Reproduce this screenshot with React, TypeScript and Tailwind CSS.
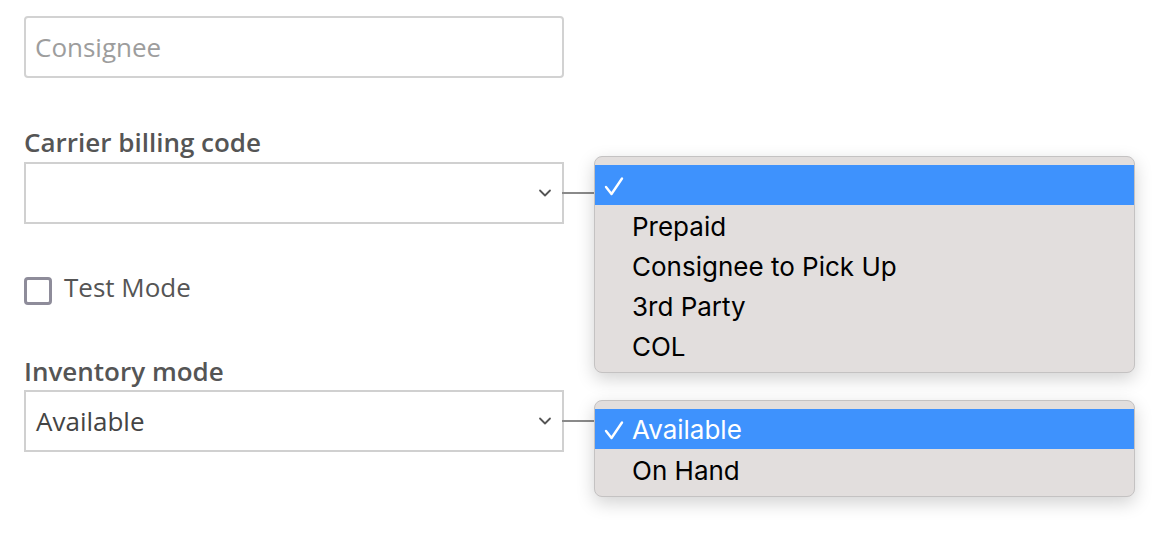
import React from 'react';

const Chevron = () => (
  <svg width="14" height="9" viewBox="0 0 14 9" className="absolute right-[10px] top-1/2 -translate-y-1/2">
    <path d="M2 2 L7 7 L12 2" fill="none" stroke="#555" strokeWidth="1.8" strokeLinecap="round" strokeLinejoin="round" />
  </svg>
);

const Check = () => (
  <svg width="20" height="20" viewBox="0 0 20 20">
    <path d="M2 11 L7.5 18 L18 2.5" fill="none" stroke="#fff" strokeWidth="2.4" strokeLinecap="round" strokeLinejoin="round" />
  </svg>
);

interface MenuProps {
  selected: string;
  items: string[];
  className: string;
}

const Menu = ({ selected, items, className }: MenuProps) => {
  return (
    <div
      className={`absolute left-[calc(100%+32px)] w-[541px] rounded-[8px] border border-[#c4c2c2] bg-[#e2dedd] pt-[8px] pb-[7px] shadow-[0_6px_18px_rgba(0,0,0,0.18)] font-['Inter',sans-serif] ${className}`}
    >
      <div className="flex h-[40px] items-center bg-[#3e92fd] pt-[2px] text-white">
        <span className="flex w-[37px] justify-center pl-[1px]">
          <Check />
        </span>
        <span className="text-[26px] leading-none">{selected}</span>
      </div>
      {items.map((item) => (
        <div key={item} className="flex h-[40px] items-center pt-[3px] pl-[37px] text-[26px] leading-none text-black">
          {item}
        </div>
      ))}
    </div>
  );
};

const App = () => {
  return (
    <div className="h-[544px] w-[1176px] bg-white pt-4 pl-6 font-['Open_Sans',sans-serif]">
      <div className="w-[540px]">
        <input
          className="h-[62px] w-full rounded-[4px] border-2 border-[#d2d2d2] px-[9px] text-[26px] text-[#444] placeholder:text-[#9d9d9d] focus:outline-none"
          placeholder="Consignee"
        />

        <label className="mt-[49px] mb-[5px] block text-[26px] font-semibold leading-[30px] text-[#555]">
          Carrier billing code
        </label>
        <div className="relative h-[62px] w-full border-2 border-[#d0d0d0] bg-white">
          <Chevron />
          <div className="absolute left-full top-1/2 h-[2px] w-[32px] -translate-y-1/2 bg-[#8a8a8a]" />
          <Menu selected="" items={['Prepaid', 'Consignee to Pick Up', '3rd Party', 'COL']} className="top-[-8px]" />
        </div>

        <div className="mt-[48px] flex items-start gap-[12px]">
          <span className="mt-[5px] h-[28px] w-[28px] rounded-[4px] border-[3px] border-[#8e8c9a] bg-white" />
          <span className="text-[26px] leading-[30px] text-[#555]">Test Mode</span>
        </div>

        <label className="mt-[51px] mb-[4px] block text-[26px] font-semibold leading-[30px] text-[#555]">
          Inventory mode
        </label>
        <div className="relative flex h-[62px] w-full items-center border-2 border-[#d0d0d0] bg-white px-[10px]">
          <span className="text-[26px] leading-[30px] text-[#444]">Available</span>
          <Chevron />
          <div className="absolute left-full top-1/2 h-[2px] w-[32px] -translate-y-1/2 bg-[#8a8a8a]" />
          <Menu selected="Available" items={['On Hand']} className="top-[8px]" />
        </div>
      </div>
    </div>
  );
};

export default App;
